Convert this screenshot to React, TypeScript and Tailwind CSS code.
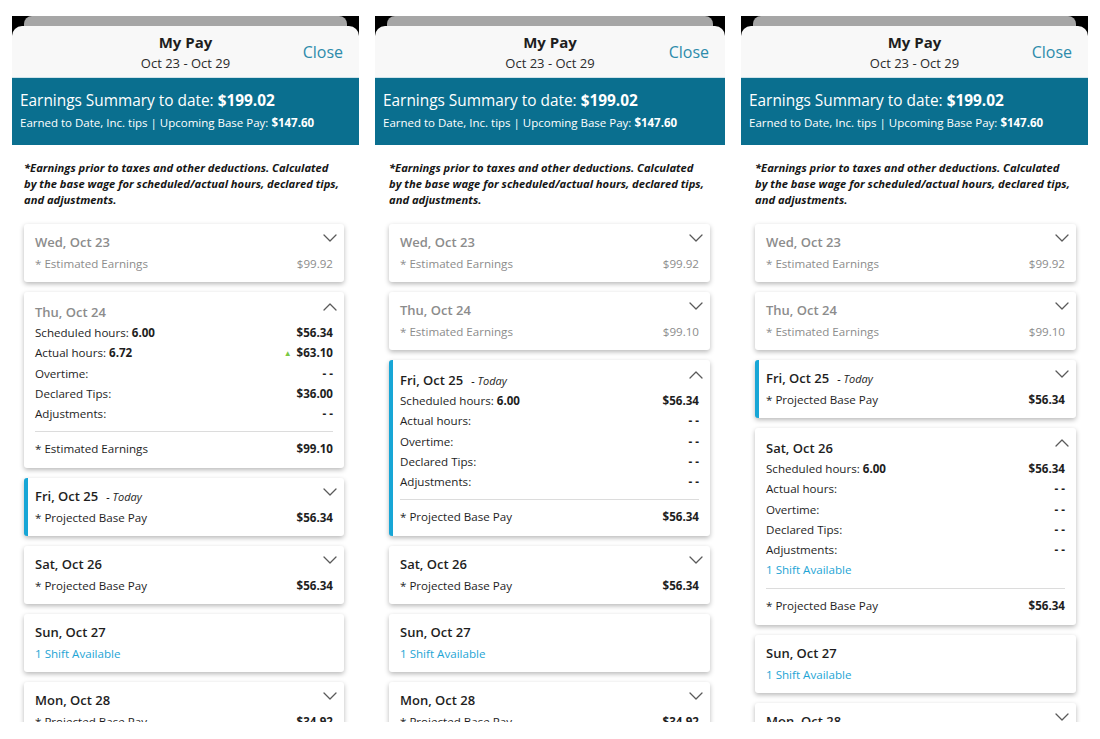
import React from "react";

type Row = { label: string; bold?: string; value: string; up?: boolean };
type Day = {
  title: string;
  past?: boolean;
  today?: boolean;
  expanded?: boolean;
  chevron?: boolean;
  rows?: Row[];
  link?: boolean;
  footLabel?: string;
  footValue?: string;
};

const Chevron = ({ up }: { up?: boolean }) => (
  <svg width="14" height="9" viewBox="0 0 14 9" className="absolute right-[7px] top-[10px]">
    <polyline
      points={up ? "1,8 7,2 13,8" : "1,1 7,7 13,1"}
      fill="none"
      stroke="#5a5a5a"
      strokeWidth="1.3"
      strokeLinecap="round"
      strokeLinejoin="round"
    />
  </svg>
);

const Card = ({ d }: { d: Day }) => {
  const titleColor = d.past ? "text-[#8c8c8c]" : "text-[#1e1e1e]";
  const rowColor = d.past ? "text-[#8c8c8c]" : "text-[#1e1e1e]";
  return (
    <div
      className={`relative bg-white rounded-[3px] shadow-[0_2px_5px_rgba(0,0,0,0.28)] shrink-0 ${
        d.today ? "border-l-[4px] border-[#17a6d6] pl-[7px]" : "pl-[11px]"
      } pr-[11px] ${d.expanded ? "pt-[10px] pb-[9px]" : "pt-[8px] pb-[8px]"}`}
    >
      {d.chevron !== false && <Chevron up={d.expanded} />}
      <div className={`h-[20px] leading-[20px] text-[13px] font-semibold ${titleColor} flex items-baseline`}>
        <span>{d.title}</span>
        {d.today && <span className="ml-[8px] text-[11px] italic font-normal text-[#1e1e1e]">- Today</span>}
      </div>
      {d.expanded ? (
        <>
          <div className="mt-[1px]">
            {d.rows!.map((r, i) => (
              <div key={i} className="h-[20.25px] leading-[20.25px] flex justify-between text-[11.6px] text-[#1e1e1e]">
                <span>
                  {r.label}
                  {r.bold && <span className="font-bold"> {r.bold}</span>}
                </span>
                <span className="font-bold flex items-center">
                  {r.up && <span className="text-[#7ac943] text-[8px] mr-[5px]">▲</span>}
                  {r.value}
                </span>
              </div>
            ))}
            {d.link && (
              <div className="h-[20.25px] leading-[20.25px] text-[11.6px] text-[#1ea5d5]">1 Shift Available</div>
            )}
          </div>
          <div className="mt-[7px] h-px bg-[#dcdcdc]" />
          <div className="mt-[7px] h-[20px] leading-[20px] flex justify-between text-[11.6px] text-[#1e1e1e]">
            <span>{d.footLabel}</span>
            <span className="font-bold">{d.footValue}</span>
          </div>
        </>
      ) : (
        <div className={`mt-[2px] h-[20px] leading-[20px] flex justify-between text-[11.6px] ${rowColor}`}>
          {d.link ? (
            <span className="text-[#1ea5d5]">1 Shift Available</span>
          ) : (
            <>
              <span>{d.footLabel}</span>
              <span className={d.past ? "" : "font-bold"}>{d.footValue}</span>
            </>
          )}
        </div>
      )}
    </div>
  );
};

const emptyRows: Row[] = [
  { label: "Scheduled hours:", bold: "6.00", value: "$56.34" },
  { label: "Actual hours:", value: "- -" },
  { label: "Overtime:", value: "- -" },
  { label: "Declared Tips:", value: "- -" },
  { label: "Adjustments:", value: "- -" },
];

const wed: Day = { title: "Wed, Oct 23", past: true, footLabel: "* Estimated Earnings", footValue: "$99.92" };
const thuC: Day = { title: "Thu, Oct 24", past: true, footLabel: "* Estimated Earnings", footValue: "$99.10" };
const thuE: Day = {
  title: "Thu, Oct 24",
  past: true,
  expanded: true,
  rows: [
    { label: "Scheduled hours:", bold: "6.00", value: "$56.34" },
    { label: "Actual hours:", bold: "6.72", value: "$63.10", up: true },
    { label: "Overtime:", value: "- -" },
    { label: "Declared Tips:", value: "$36.00" },
    { label: "Adjustments:", value: "- -" },
  ],
  footLabel: "* Estimated Earnings",
  footValue: "$99.10",
};
const friC: Day = { title: "Fri, Oct 25", today: true, footLabel: "* Projected Base Pay", footValue: "$56.34" };
const friE: Day = {
  title: "Fri, Oct 25",
  today: true,
  expanded: true,
  rows: emptyRows,
  footLabel: "* Projected Base Pay",
  footValue: "$56.34",
};
const satC: Day = { title: "Sat, Oct 26", footLabel: "* Projected Base Pay", footValue: "$56.34" };
const satE: Day = {
  title: "Sat, Oct 26",
  expanded: true,
  rows: emptyRows,
  link: true,
  footLabel: "* Projected Base Pay",
  footValue: "$56.34",
};
const sun: Day = { title: "Sun, Oct 27", chevron: false, link: true };
const mon: Day = { title: "Mon, Oct 28", footLabel: "* Projected Base Pay", footValue: "$34.92" };

const Panel = ({ days, width, pad }: { days: Day[]; width: string; pad: string }) => (
  <div className={`${width} h-[706px] overflow-hidden bg-white shrink-0`}>
    <div className="bg-black">
      <div className="mx-[12px] h-[10px] rounded-t-[8px] bg-[#a6a6a6]" />
      <div className="relative h-[51px] rounded-t-[10px] bg-[#f8f8f8] flex flex-col items-center">
        <div className="mt-[6px] h-[20px] leading-[20px] text-[15px] font-bold text-[#1e1e1e]">My Pay</div>
        <div className="mt-[2px] h-[18px] leading-[18px] text-[13px] text-[#2a2a2a]">Oct 23 - Oct 29</div>
        <div className="absolute right-[16px] top-[15px] text-[16px] leading-[22px] text-[#2d8bab]">Close</div>
      </div>
    </div>
    <div className="h-[68px] bg-[#0a6f8f] border-t border-[#cfe3ea] px-[8px] text-white">
      <div className="pt-[12px] h-[34px] leading-[22px] text-[15.4px]">
        Earnings Summary to date: <span className="font-bold">$199.02</span>
      </div>
      <div className="mt-[2px] h-[18px] leading-[18px] text-[11.5px]">
        Earned to Date, Inc. tips | Upcoming Base Pay: <span className="font-bold">$147.60</span>
      </div>
    </div>
    <div className={pad}>
      <div className="pt-[15px] w-[316px] text-[11.2px] leading-[16px] font-bold italic text-[#161616]">
        *Earnings prior to taxes and other deductions. Calculated by the base wage for scheduled/actual hours, declared
        tips, and adjustments.
      </div>
      <div className="mt-[16px] flex flex-col gap-[10px]">
        {days.map((d, i) => (
          <Card key={i} d={d} />
        ))}
      </div>
    </div>
  </div>
);

export default function App() {
  return (
    <div
      className="w-[1100px] h-[739px] bg-white overflow-hidden pt-[16px] pl-[12px] flex items-start gap-[16px]"
      style={{ fontFamily: '"Open Sans", "Noto Sans", sans-serif' }}
    >
      <Panel width="w-[347px]" pad="pl-[12px] pr-[15px]" days={[wed, thuE, friC, satC, sun, mon]} />
      <Panel width="w-[350px]" pad="pl-[14px] pr-[15px]" days={[wed, thuC, friE, satC, sun, mon]} />
      <Panel width="w-[347px]" pad="pl-[14px] pr-[12px]" days={[wed, thuC, friC, satE, sun, mon]} />
    </div>
  );
}
